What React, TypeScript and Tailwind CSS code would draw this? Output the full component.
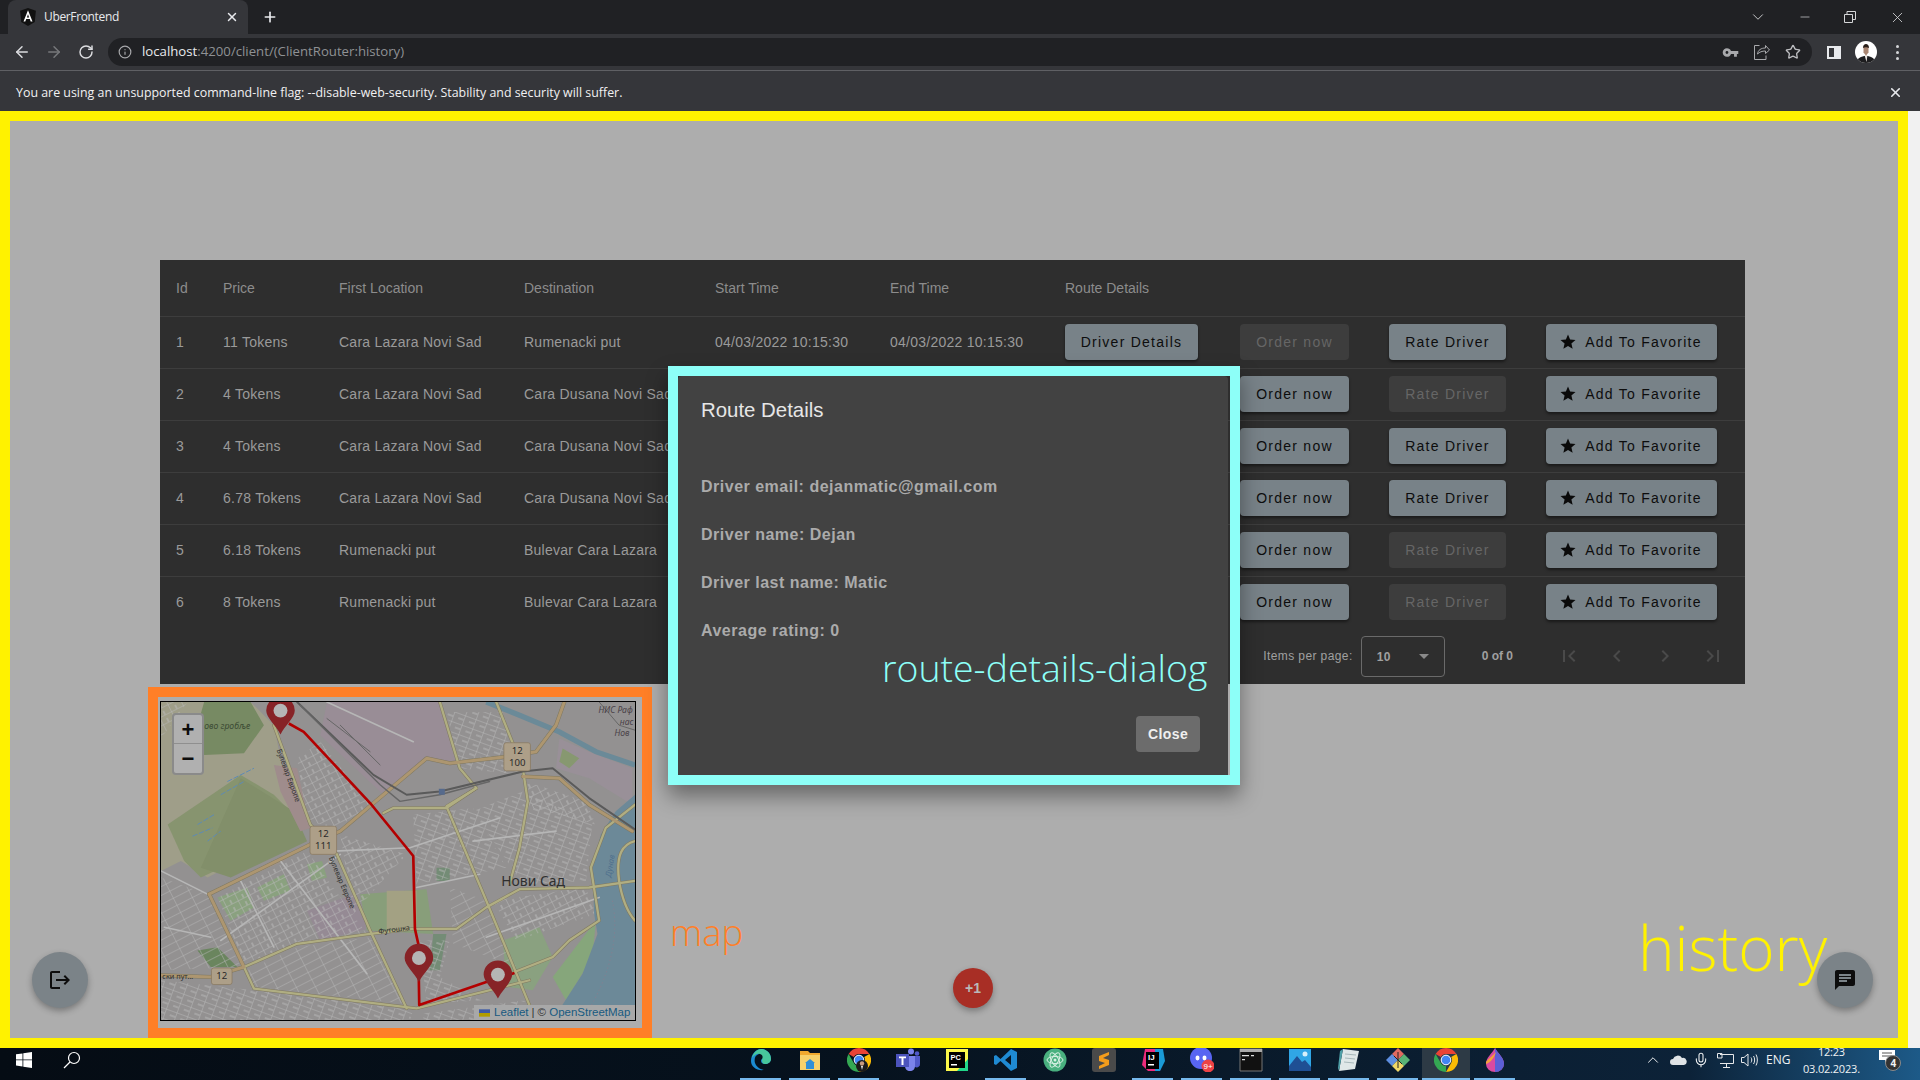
import { ArrowLeft, ArrowRight, RotateCw, Info, Star, X, Plus, ChevronDown, ChevronUp, Minus, Mic } from "lucide-react";
import { MdChat, MdChevronLeft, MdChevronRight, MdFirstPage, MdLastPage, MdLogout, MdStar, MdVpnKey } from "react-icons/md";

const rows = [
  { id: 1, price: "11 Tokens", from: "Cara Lazara Novi Sad", to: "Rumenacki put", order: false, rate: true },
  { id: 2, price: "4 Tokens", from: "Cara Lazara Novi Sad", to: "Cara Dusana Novi Sad", order: true, rate: false },
  { id: 3, price: "4 Tokens", from: "Cara Lazara Novi Sad", to: "Cara Dusana Novi Sad", order: true, rate: true },
  { id: 4, price: "6.78 Tokens", from: "Cara Lazara Novi Sad", to: "Cara Dusana Novi Sad", order: true, rate: true },
  { id: 5, price: "6.18 Tokens", from: "Rumenacki put", to: "Bulevar Cara Lazara", order: true, rate: false },
  { id: 6, price: "8 Tokens", from: "Rumenacki put", to: "Bulevar Cara Lazara", order: true, rate: false },
];

function TableButton({ label, enabled, width, star }: { label: string; enabled: boolean; width: string; star?: boolean }) {
  return (
    <div
      className={`${width} ${
        enabled ? "bg-[#788288] text-[#0d0d0d] shadow-[0_2px_3px_rgba(0,0,0,0.45)]" : "bg-[#3d3d3d] text-[#666666]"
      } ${star ? "pr-[2px]" : ""} flex h-[36px] items-center justify-center rounded-[4px] text-[14px] tracking-[1.25px]`}
    >
      {star && <MdStar className="mr-[8px] text-[#0a0a0a]" size={18} />}
      {label}
    </div>
  );
}

function Browser() {
  return (
    <>
      {/* tab strip */}
      <div className="flex h-[34px] items-end bg-[#202124] pl-[8px] text-[#e8eaed]">
        <div className="flex h-[34px] w-[240px] items-center rounded-t-[8px] bg-[#35363a] pl-[12px] pr-[9px]">
          <svg width="16" height="18" viewBox="0 0 14 16">
            <path d="M7 0 14 2.5 13 12.5 7 16 1 12.5 0 2.5Z" fill="#111" />
            <path d="M7 2 3 12h1.6l.8-2.2h3.2L9.400 12H11ZM6 8.400 7 5.600 8 8.400Z" fill="#fff" />
          </svg>
          <span className="ml-[8px] flex-1 font-['Open_Sans',sans-serif] text-[12px] tracking-[-0.35px]">UberFrontend</span>
          <X size={14} strokeWidth={2.5} />
        </div>
        <div className="flex h-[34px] w-[44px] items-center justify-center">
          <Plus size={16} strokeWidth={2.5} />
        </div>
        <div className="ml-auto flex h-[34px] items-center text-[#d5d6d8]">
          <ChevronDown size={18} strokeWidth={1.2} className="mr-[31px]" />
          <Minus size={14} strokeWidth={1.2} className="mr-[32px]" />
          <svg width="12" height="12" viewBox="0 0 12 12" fill="none" stroke="currentColor" className="mr-[33px]">
            <path d="M.5 3.500h8v8h-8zM3 3.500V.5h8.500v8H8.500" />
          </svg>
          <X size={17} strokeWidth={1.2} className="mr-[14px]" />
        </div>
      </div>

      {/* toolbar */}
      <div className="flex h-[37px] items-center border-b border-[#5f6064] bg-[#35363a] pl-[13px] text-[#dcdde0]">
        <ArrowLeft size={18} strokeWidth={2} />
        <ArrowRight size={18} strokeWidth={2} className="ml-[14px] text-[#77787b]" />
        <RotateCw size={16} strokeWidth={2.2} className="ml-[15px]" />
        <div className="ml-[14px] flex h-[28px] w-[1704px] items-center rounded-full bg-[#202124] pl-[10px] pr-[11px]">
          <Info size={14} className="text-[#a8a9ac]" />
          <span className="ml-[10px] flex-1 font-['Open_Sans',sans-serif] text-[13.2px] text-[#8f9194]">
            <span className="text-[#e8eaed]">localhost</span>:4200/client/(ClientRouter:history)
          </span>
          <MdVpnKey size={17} className="mr-[15px] text-[#a8a9ac]" />
          <svg width="16" height="16" viewBox="0 0 16 16" fill="none" stroke="#a8a9ac" className="mr-[15px]">
            <path d="M5.500 1.500H.5v14h11.500v-4M3.500 10c.5-4 3.500-6 8-6V1.500l4 4.500-4 3.500V7c-3.500 0-6 1-8 3Z" />
          </svg>
          <Star size={16} className="text-[#bdbec1]" />
        </div>
        <svg width="14" height="13" viewBox="0 0 14 13" className="ml-[15px]">
          <path d="M0 0h14v13H0z" fill="#e8eaed" />
          <path d="M2 2h5v9H2z" fill="#35363a" />
        </svg>
        <div className="relative ml-[14px] h-[22px] w-[22px] overflow-hidden rounded-full bg-white">
          <svg width="22" height="22" viewBox="0 0 22 22">
            <path d="M2 22c0-5 4-7 9-7s9 2 9 7Z" fill="#1d1d1f" />
            <path d="M9.500 14h3l-1 7Z" fill="#e8e4e0" />
            <path d="M8.500 6h5v5.500l-2.500 3-2.500-3Z" fill="#a98672" />
            <path d="M8 7c0-3 1.500-4 3-4s3 1 3 4c-1.500-1-4.500-1-6 0Z" fill="#2a1f1a" />
          </svg>
        </div>
        <div className="ml-[19px] flex flex-col gap-[3px]">
          <span className="h-[3px] w-[3px] rounded-full bg-[#d5d6d8]" />
          <span className="h-[3px] w-[3px] rounded-full bg-[#d5d6d8]" />
          <span className="h-[3px] w-[3px] rounded-full bg-[#d5d6d8]" />
        </div>
      </div>

      {/* infobar */}
      <div className="flex h-[40px] items-center justify-between bg-[#35363a] pl-[16px] pr-[17px] pt-[3px] font-['Open_Sans',sans-serif] text-[12.4px] text-[#f1f1f2]">
        <span className="pt-[2px]">You are using an unsupported command-line flag: --disable-web-security. Stability and security will suffer.</span>
        <X size={15} strokeWidth={2.5} className="text-[#e8eaed]" />
      </div>
    </>
  );
}

function HistoryTable() {
  return (
    <div className="ml-[150px] mt-[139px] w-[1585px] bg-[#2e2e2e] font-['Liberation_Sans',sans-serif] text-[14px] text-[#9a9a9a]">
      <table className="w-full table-fixed border-collapse">
        <colgroup>
          <col className="w-[63px]" />
          <col className="w-[116px]" />
          <col className="w-[185px]" />
          <col className="w-[191px]" />
          <col className="w-[175px]" />
          <col className="w-[175px]" />
          <col className="w-[175px]" />
          <col className="w-[149px]" />
          <col className="w-[157px]" />
          <col className="w-[199px]" />
        </colgroup>
        <thead>
          <tr className="h-[56px] border-b border-[#3d3d3d] text-left text-[#8c8c8c]">
            <th className="pl-[16px] pt-[1px] font-normal">Id</th>
            <th className="pt-[1px] font-normal">Price</th>
            <th className="pt-[1px] font-normal">First Location</th>
            <th className="pt-[1px] font-normal">Destination</th>
            <th className="pt-[1px] font-normal">Start Time</th>
            <th className="pt-[1px] font-normal">End Time</th>
            <th className="pt-[1px] font-normal">Route Details</th>
            <th colSpan={3}></th>
          </tr>
        </thead>
        <tbody className="tracking-[0.25px]">
          {rows.map((row, i) => (
            <tr key={row.id} className={`h-[52px] ${i < rows.length - 1 ? "border-b border-[#3d3d3d]" : ""}`}>
              <td className="pl-[16px]">{row.id}</td>
              <td>{row.price}</td>
              <td>{row.from}</td>
              <td className="whitespace-nowrap">{row.to}</td>
              <td>{i === 0 && "04/03/2022 10:15:30"}</td>
              <td>{i === 0 && "04/03/2022 10:15:30"}</td>
              <td>{i === 0 && <TableButton label="Driver Details" enabled width="w-[133px]" />}</td>
              <td><TableButton label="Order now" enabled={row.order} width="w-[109px]" /></td>
              <td><TableButton label="Rate Driver" enabled={row.rate} width="w-[117px]" /></td>
              <td><TableButton label="Add To Favorite" enabled star width="w-[171px]" /></td>
            </tr>
          ))}
        </tbody>
      </table>
      <div className="flex h-[56px] items-center justify-end pr-[8px] text-[12px] tracking-[0.4px] text-[#a0a0a0]">
        <span>Items per page:</span>
        <div className="ml-[8px] mt-[1px] flex h-[41px] w-[84px] items-center justify-between rounded-[4px] border border-[#6a6a6a] pl-[15px] pr-[15px] font-bold">
          <span>10</span>
          <span className="h-0 w-0 border-x-[5px] border-t-[5px] border-x-transparent border-t-[#8a8a8a]" />
        </div>
        <span className="ml-[37px] font-bold tracking-normal">0 of 0</span>
        <div className="ml-[32px] flex text-[#4a4a4a]">
          <MdFirstPage size={24} className="mx-[12px]" />
          <MdChevronLeft size={24} className="mx-[12px]" />
          <MdChevronRight size={24} className="mx-[12px]" />
          <MdLastPage size={24} className="mx-[12px]" />
        </div>
      </div>
    </div>
  );
}

function Pin({ cx, tip }: { cx: number; tip: number }) {
  const y = tip - 72;
  return (
    <g>
      <path d={`M${cx} ${tip} C${cx - 14} ${tip - 28} ${cx - 43} ${y + 22} ${cx - 43} ${y} A43 43 0 0 1 ${cx + 43} ${y} C${cx + 43} ${y + 22} ${cx + 14} ${tip - 28} ${cx} ${tip}Z`} fill="#872327" />
      <circle cx={cx} cy={y} r="21" fill="#b5b5b5" />
    </g>
  );
}

function Shield({ x, y, w, h, lines }: { x: number; y: number; w: number; h: number; lines: string[] }) {
  return (
    <g>
      <rect x={x} y={y} width={w} height={h} rx="7" fill="#ad9f88" stroke="#85755b" strokeWidth="2" />
      {lines.map((line, i) => (
        <text key={line} x={x + w / 2} y={y + 33 + i * 36} textAnchor="middle" fontSize="29" fill="#2a2a2a" fontFamily="'Noto Sans', sans-serif">
          {line}
        </text>
      ))}
    </g>
  );
}

function CityMap() {
  const major = "#ad9670";
  const second = "#b0ae82";
  const casing = "#7f7860";
  const street = "#b6b6b6";
  const majorRoads = [
    "M205 640 510 490 600 450 730 340 860 230 930 245 1100 225 1190 210 1250 130 1275 60",
    "M205 640 310 860 210 890 60 885",
    "M1150 285 1260 290 1350 370 1480 450",
  ];
  const secondRoads = [
    "M400 130 510 430 590 520 690 750 800 985",
    "M310 860 340 925 830 985 1170 900",
    "M310 860 470 790 690 760 820 745 950 745 1040 680 1140 625 1350 620 1488 600",
    "M900 60 960 260 1010 320 920 375 1040 660 1170 975",
    "M730 395 760 380 920 380 1010 320",
    "M1070 60 1150 260 1165 360 1140 500 1110 610",
    "M1125 875 1240 830 1290 780 1380 720 1355 560 1400 440 1488 370",
    "M1440 600C1430 520 1450 490 1488 480M1440 600C1450 660 1470 700 1488 720",
  ];
  return (
    <svg viewBox="60 60 1428 960" className="block h-full w-full" preserveAspectRatio="none">
      <defs>
        <pattern id="blocksA" width="40" height="24" patternUnits="userSpaceOnUse" patternTransform="rotate(-27)">
          <path d="M0 0H40M0 0V24M20 12V24" stroke="#b8b8b8" strokeWidth="3" fill="none" />
        </pattern>
        <pattern id="blocksB" width="24" height="52" patternUnits="userSpaceOnUse" patternTransform="rotate(63)">
          <path d="M0 0H24M0 0V52" stroke="#b6b6b6" strokeWidth="3" fill="none" />
        </pattern>
        <pattern id="blocksC" width="34" height="30" patternUnits="userSpaceOnUse" patternTransform="rotate(20)">
          <path d="M0 0H34M0 0V30M17 15H34" stroke="#b7b7b7" strokeWidth="3" fill="none" />
        </pattern>
      </defs>
      <rect x="60" y="60" width="1428" height="960" fill="#939191" />

      {/* land use */}
      <path d="M560 60H900L950 250 860 230 730 340 540 160Z" fill="#998d96" />
      <path d="M60 60H330L400 130 440 330 510 430 200 590 120 540 60 570Z" fill="#9f9e89" />
      <path d="M80 430 300 280 400 340 500 440 180 590 130 540Z" fill="#87946f" />
      <path d="M180 560 300 290 460 390 500 480 270 590Z" fill="#828f6a" />
      <path d="M190 60H330L370 130 310 215 190 220 170 130Z" fill="#778a63" />
      <path d="M400 250 470 260 510 440 480 450 420 330Z" fill="#9f8c8c" />
      <path d="M200 640 510 490 420 545 250 620Z" fill="#9f938b" />
      <path d="M500 690 640 640 700 740 540 780Z" fill="#958a94" />
      <path d="M660 640 860 625 880 760 680 750Z" fill="#889e7a" />
      <path d="M740 630H830V745H740Z" fill="#a3a183" />
      <path d="M890 560H930V600H890ZM880 760H920L900 870H870Z" fill="#748c76" />
      <path d="M1090 780 1200 740 1240 830 1180 930 1100 920Z" fill="#8aa180" />
      <path d="M1240 890 1370 720 1360 830 1280 960Z" fill="#86a67b" />
      <path d="M1260 170 1350 210 1480 260V370L1350 290 1250 260Z" fill="#999098" />
      <path d="M1270 200 1320 230 1290 260 1260 240Z" fill="#879870" />
      <path d="M230 650 320 620 340 680 270 720Z" fill="#8aa17f" />
      <path d="M350 620 430 580 450 630 370 660Z" fill="#8aa17f" />
      <path d="M500 550 545 540 560 590 515 600Z" fill="#8aa17f" />
      <path d="M170 810 230 800 290 860 210 860Z" fill="#6a855e" />

      {/* street blocks */}
      <path d="M470 230 540 180 690 370 590 440 500 420Z" fill="url(#blocksA)" />
      <path d="M600 460 800 520 690 640 640 700Z" fill="url(#blocksA)" />
      <path d="M820 400 1000 380 1100 560 830 610Z" fill="url(#blocksC)" />
      <path d="M1000 390 1150 330 1360 420 1340 600 1150 610Z" fill="url(#blocksC)" />
      <path d="M920 90 1090 90 1150 280 960 260Z" fill="url(#blocksC)" />
      <path d="M1160 300 1340 360 1370 430 1180 380Z" fill="url(#blocksA)" />
      <path d="M320 870 470 800 690 770 790 970 340 920Z" fill="url(#blocksB)" />
      <path d="M230 650 500 510 680 760 470 790 310 850Z" fill="url(#blocksA)" />
      <path d="M60 590 200 640 300 860 60 870Z" fill="url(#blocksB)" />
      <path d="M60 900 340 930 820 990 810 1020H60Z" fill="url(#blocksC)" />
      <path d="M930 620 1040 660 1130 860 940 790Z" fill="url(#blocksB)" />
      <path d="M1060 660 1340 620 1370 700 1130 780Z" fill="url(#blocksA)" />
      <path d="M850 1000 1160 960 1100 1020H850Z" fill="url(#blocksC)" />
      <path d="M60 60 140 60 60 170Z" fill="url(#blocksA)" />
      <path d="M840 780 930 780 900 890 1030 960 860 970Z" fill="url(#blocksC)" />

      {/* water */}
      <path d="M1488 340 1430 390 1385 460 1360 560 1365 700 1375 760 1330 880 1240 1020H1488Z" fill="#6c8998" />
      <path d="M1040 60 1140 100 1260 150 1370 210 1488 250" stroke="#6b8a98" strokeWidth="16" fill="none" />
      <path d="M1420 660C1440 760 1420 880 1330 1020" stroke="#8f7b8c" strokeWidth="2" strokeDasharray="4 8" fill="none" />
      <path d="M170 430 220 400M155 465 215 440M260 300 340 260M240 340 310 300M200 480 240 450" stroke="#5d8ab5" strokeWidth="3" strokeDasharray="16 5" fill="none" />

      {/* roads */}
      <g fill="none" strokeLinejoin="round" strokeLinecap="round">
        <path d="M580 510 810 500 1080 410M240 780 600 520M1020 580 830 620M70 740 210 770M60 570 200 640" stroke={street} strokeWidth="5" />
        <path d="M420 540 680 880M300 600 400 800M1000 480 1250 450M1040 770 1380 650M560 60 820 180" stroke={street} strokeWidth="5" />
        {secondRoads.map((d) => (
          <path key={d} d={d} stroke={casing} strokeWidth="10" />
        ))}
        {majorRoads.map((d) => (
          <path key={d} d={d} stroke={casing} strokeWidth="12" />
        ))}
        {secondRoads.map((d) => (
          <path key={d} d={d} stroke={second} strokeWidth="7" />
        ))}
        {majorRoads.map((d) => (
          <path key={d} d={d} stroke={major} strokeWidth="9" />
        ))}

        {/* railway */}
        <path d="M470 60 700 280 800 340 900 330 1150 270 1240 260 1350 350 1488 445" stroke="#5a5a5a" strokeWidth="6" />
        <path d="M480 70 720 310 780 360 900 340 1050 300" stroke="#666666" strokeWidth="4" />
        <path d="M560 110 690 210M1380 60 1440 130 1488 145M600 130 720 250" stroke="#666666" strokeWidth="3" />
      </g>
      <rect x="897" y="322" width="18" height="18" fill="#566a8c" />

      {/* route */}
      <path d="M445 125 490 150 690 365 820 525 825 745 835 790 838 975 1040 905 1125 878" stroke="#b30000" strokeWidth="8" fill="none" strokeLinejoin="round" />
      <Pin cx={420} tip={158} />
      <Pin cx={837} tip={905} />
      <Pin cx={1075} tip={955} />

      {/* labels */}
      <g fontFamily="'Noto Sans', sans-serif" fill="#2f2f2f">
        <text x="1085" y="616" fontSize="42">Нови Сад</text>
        <text x="190" y="142" fontSize="26" fontStyle="italic" fill="#3c4a34">ово гробље</text>
        <text x="1378" y="92" fontSize="26" fontStyle="italic" fill="#4a4248">НИС Раф</text>
        <text x="1442" y="128" fontSize="26" fontStyle="italic" fill="#4a4248">нас</text>
        <text x="1426" y="164" fontSize="26" fontStyle="italic" fill="#4a4248">Нов</text>
        <text x="0" y="0" fontSize="22" transform="translate(408 205) rotate(70)">Булевар Европе</text>
        <text x="0" y="0" fontSize="22" transform="translate(565 530) rotate(67)">Булевар Европе</text>
        <text x="0" y="0" fontSize="22" transform="translate(716 760) rotate(-7)">Футошка</text>
        <text x="64" y="896" fontSize="22">ски пут...</text>
        <text x="0" y="0" fontSize="24" fill="#4f6f8c" fontStyle="italic" transform="translate(1415 590) rotate(-80)">Дунав</text>
      </g>
      <Shield x={1093} y={183} w={80} h={85} lines={["12", "100"]} />
      <Shield x={509} y={435} w={80} h={85} lines={["12", "111"]} />
      <Shield x={212} y={863} w={62} h={50} lines={["12"]} />
    </svg>
  );
}

function MapPanel() {
  return (
    <div className="ml-[138px] mt-[3px] h-[351px] w-[504px] border-[10px] border-[#ff7f27] bg-[#adadad] pb-[7px] pl-[2px] pr-[6px] pt-[4px]">
      <div className="relative h-full w-full border border-black">
        <CityMap />
        <div className="absolute left-[11px] top-[11px] w-[32px] overflow-hidden rounded-[4px] border-2 border-[#8a8a8a] bg-[#b0b0b0] text-center font-['Liberation_Sans',sans-serif] font-bold text-[#0d0d0d]">
          <div className="flex h-[29px] items-center justify-center border-b border-[#8f8f8f] text-[22px]">+</div>
          <div className="flex h-[29px] items-center justify-center text-[22px]">−</div>
        </div>
        <div className="absolute bottom-0 right-0 flex h-[15px] w-[161px] items-center bg-[#a8a8a8] pl-[5px] font-['Liberation_Sans',sans-serif] text-[11.5px] text-[#333333]">
          <svg width="11" height="8" viewBox="0 0 12 8" className="mr-[4px]">
            <path d="M0 0h12v4H0z" fill="#3e5aa6" />
            <path d="M0 4h12v4H0z" fill="#b09c00" />
          </svg>
          <span className="text-[#175a80]">Leaflet</span>
          <span className="mx-[3px]">|</span>
          <span>©&nbsp;</span>
          <span className="text-[#175a80]">OpenStreetMap</span>
        </div>
      </div>
    </div>
  );
}

function RouteDialog() {
  return (
    <div className="absolute left-[658px] top-[245px] z-10 h-[419px] w-[572px] border-[10px] border-[#8dfff8] shadow-[0_11px_20px_rgba(0,0,0,0.4)]">
      <div className="relative h-full w-[550px] rounded-t-[4px] bg-[#424242] px-[23px] font-['Liberation_Sans',sans-serif]">
        <h2 className="pt-[22px] text-[20.4px] leading-[24px] text-[#e6e6e6]">Route Details</h2>
        <div className="mt-[41px] text-[16px] font-bold leading-[48px] tracking-[0.5px] text-[#ababab]">
          <p>Driver email: dejanmatic@gmail.com</p>
          <p>Driver name: Dejan</p>
          <p>Driver last name: Matic</p>
          <p>Average rating: 0</p>
        </div>
        <div className="absolute bottom-[23px] right-[28px] flex h-[36px] w-[64px] items-center justify-center rounded-[4px] bg-[#6c6c6c] text-[14px] font-bold tracking-[0.4px] text-[#efefef]">
          Close
        </div>
      </div>
      <span className="absolute left-[204px] top-[267px] font-['Open_Sans',sans-serif] text-[37.4px] font-light leading-[50px] text-[#8dfff8]">
        route-details-dialog
      </span>
    </div>
  );
}

function Taskbar() {
  return (
    <div className="relative flex h-[32px] items-center overflow-hidden bg-[linear-gradient(90deg,#050c14_0%,#06121e_45%,#0a1c2e_70%,#0c2238_88%,#1d5a88_100%)] text-[#f0f2f4]">
      <svg width="16" height="16" viewBox="0 0 16 16" className="mb-[8px] ml-[16px]" fill="#fff">
        <path d="M0 2.300 6.500 1.400V7.500H0ZM7.300 1.300 16 0V7.500H7.300ZM0 8.300H6.500V14.500L0 13.600ZM7.300 8.300H16V16L7.300 14.700Z" />
      </svg>
      <svg width="18" height="18" viewBox="0 0 18 18" fill="none" stroke="#fff" strokeWidth="1.200" className="mb-[8px] ml-[31px]">
        <circle cx="11" cy="7" r="5.500" />
        <path d="M7 11 1 17" />
      </svg>

      <div className="ml-[655px] flex items-center">
        <TaskIcon underline>
          <path d="M2 13C2 6 7 1 12 1s10 4 10 10c0 3-3 5-6 5-2 0-4-1-4-3 0-3 4-2 3-5-1-2-3-3-5-2-4 1-5 5-4 9 1 3 4 6 9 7-7 1-13-3-13-9Z" fill="#1b8ad0" />
          <path d="M12 1c5 0 10 4 10 10 0 3-3 5-6 5-3 0-3-3-3-4 1-3 1-5-2-6-3-1-6 1-8 4 1-5 5-9 9-9Z" fill="#47c79b" />
        </TaskIcon>
        <TaskIcon underline>
          <path d="M2 3h8l2 2h10v3H2Z" fill="#f0a92e" />
          <path d="M2 7h20v15H2Z" fill="#f6d16a" />
          <path d="M8 15h8v6H8Z" fill="#2f8fd6" />
          <path d="M7 15h10l-5-4Z" fill="#2f8fd6" />
        </TaskIcon>
        <TaskIcon underline>
          <ChromeMark />
          <circle cx="15" cy="18" r="6" fill="#1b1b1b" />
          <circle cx="15" cy="15.500" r="2.200" fill="#c99b80" />
          <path d="M14 18h2l-1 4Z" fill="#eee" />
        </TaskIcon>
        <TaskIcon>
          <circle cx="15" cy="3.500" r="3" fill="#7b83eb" />
          <circle cx="21" cy="5.500" r="2.300" fill="#5059c9" />
          <path d="M17 8h7v8c0 3-3 4-5 3Z" fill="#5059c9" />
          <path d="M9 8h10v10c0 3-2 5-5 5s-5-2-5-5Z" fill="#7b83eb" />
          <path d="M0 6h13v13H0Z" fill="#4b53bc" />
          <path d="M3 8.500h7v1.800H7.500V17H5.500v-6.700H3Z" fill="#fff" />
        </TaskIcon>
        <TaskIcon>
          <path d="M1 1h22v22H1Z" fill="#21d789" />
          <path d="M1 1h22v10L12 23H1Z" fill="#fcf84a" />
          <path d="M4 4h16v16H4Z" fill="#000" />
          <text x="5.500" y="12" fontSize="7.500" fill="#fff" fontFamily="'Liberation Sans', sans-serif" fontWeight="700">PC</text>
          <path d="M6 16h6v1.500H6Z" fill="#fff" />
        </TaskIcon>
        <TaskIcon underline>
          <path d="M17 1 23 4V20L17 23 6.500 13 2 17 0 16V8L2 7 6.500 11ZM17 7 11 12 17 17Z" fill="#1f8ad2" />
        </TaskIcon>
        <TaskIcon>
          <circle cx="12" cy="12" r="11.500" fill="#49b07f" />
          <g fill="none" stroke="#d8f0e4" strokeWidth="1">
            <ellipse cx="12" cy="12" rx="8" ry="3.500" transform="rotate(60 12 12)" />
            <ellipse cx="12" cy="12" rx="8" ry="3.500" transform="rotate(-60 12 12)" />
            <ellipse cx="12" cy="12" rx="8" ry="3.500" />
          </g>
          <circle cx="12" cy="12" r="1.500" fill="#d8f0e4" />
        </TaskIcon>
        <TaskIcon>
          <rect x="0" y="0" width="24" height="24" rx="3" fill="#4a4a4a" />
          <path d="M17 4 7 8v5l6 2-6 3v3l10-4v-5l-6-2 6-3Z" fill="#f49d1c" />
        </TaskIcon>
        <TaskIcon underline>
          <path d="M4 1h12l6 8-3 14H7L1 17Z" fill="#ed2b7b" />
          <path d="M14 1h8l2 12-5 10h-5Z" fill="#1a9ad6" />
          <path d="M5 4h13v17H5Z" fill="#000" />
          <text x="7" y="12" fontSize="8" fill="#fff" fontFamily="'Liberation Sans', sans-serif" fontWeight="700">IJ</text>
          <path d="M7 16h6v1.500H7Z" fill="#fff" />
        </TaskIcon>
        <TaskIcon underline>
          <circle cx="11" cy="10" r="11" fill="#5865f2" />
          <ellipse cx="7.500" cy="10" rx="2" ry="2.400" fill="#fff" />
          <ellipse cx="14.500" cy="10" rx="2" ry="2.400" fill="#fff" />
          <circle cx="18" cy="18" r="6.500" fill="#ed4245" />
          <text x="18" y="21" fontSize="8" textAnchor="middle" fill="#fff" fontFamily="'Liberation Sans', sans-serif">9+</text>
        </TaskIcon>
        <TaskIcon underline>
          <path d="M1 1h22v22H1Z" fill="#111" stroke="#777" />
          <path d="M1 1h22v3H1Z" fill="#aaa" />
          <path d="M3 7h7v1.300H3ZM12 7h3v1.300h-3ZM3 11h3v1.300H3Z" fill="#ddd" />
        </TaskIcon>
        <TaskIcon underline>
          <path d="M1 1h22v22H1Z" fill="#30a6e6" />
          <circle cx="17" cy="6" r="2.500" fill="#d6f0fb" />
          <path d="M1 23V18L9 8l5 6 3-2 6 7v4Z" fill="#1f4f94" />
        </TaskIcon>
        <TaskIcon underline>
          <path d="M6 1 22 3 18 21 2 23Z" fill="#dfe7e8" />
          <path d="M2 23 6 1 3 3 1 20Z" fill="#4fa0a8" />
          <path d="M8 6 19 7M8 10 18 11M7 14 17 15" stroke="#a7b8bb" />
        </TaskIcon>
        <TaskIcon underline>
          <path d="M12 0 18 6 12 12 6 6Z" fill="#e06a60" />
          <path d="M6 6 12 12 6 18 0 12Z" fill="#5d8ee0" />
          <path d="M18 6 24 12 18 18 12 12Z" fill="#59b376" />
          <path d="M12 12 18 18 12 24 6 18Z" fill="#f0d868" />
          <path d="M12 4V20M8 8 16 16" stroke="#222" />
        </TaskIcon>
        <div className="relative flex h-[32px] w-[48px] items-start justify-center bg-[#2d3a45]">
          <svg width="24" height="24" viewBox="0 0 24 24"><ChromeMark /></svg>
          <span className="absolute bottom-0 left-0 h-[2px] w-full bg-[#76b9ed]" />
        </div>
        <TaskIcon underline>
          <path d="M12 0C15 6 21 9 21 16a9 8 0 0 1-18 0C3 9 9 6 12 0Z" fill="#d94aa0" />
          <path d="M12 0C15 6 21 9 21 16a9 8 0 0 1-9 8Z" fill="#5b5fd6" />
          <path d="M3 14C7 9 10 8 13 4 11 10 8 14 3 16Z" fill="#f2a33a" />
        </TaskIcon>
      </div>

      <div className="ml-[121px] flex h-[32px] flex-1 items-center font-['Open_Sans',sans-serif] text-[12px]">
        <ChevronUp size={18} strokeWidth={1.300} className="mb-[8px] ml-[4px]" />
        <svg width="17" height="10" viewBox="0 0 17 10" fill="#dfe3e6" className="mb-[8px] ml-[8px]">
          <path d="M3 10a3 3 0 0 1 0-6 5 5 0 0 1 9-1 3.500 3.500 0 0 1 2 7Z" />
        </svg>
        <Mic size={16} strokeWidth={1.600} className="mb-[8px] ml-[6px]" />
        <svg width="17" height="15" viewBox="0 0 17 15" fill="none" stroke="#e6e8ea" className="mb-[8px] ml-[8px]">
          <path d="M3 1.500H16.500V10.500H3M9.500 10.500V14M6 14.500H13M.5 .5H5V5H.5Z" />
        </svg>
        <svg width="17" height="14" viewBox="0 0 17 14" fill="none" stroke="#e6e8ea" className="mb-[8px] ml-[7px]">
          <path d="M.5 4.500H3L7 1V13L3 9.500H.5ZM10 4.500C11 6 11 8 10 9.500M12.500 3C14 5 14 9 12.500 11M15 1.500C16.800 4.500 16.800 9.500 15 12.500" />
        </svg>
        <span className="mb-[8px] ml-[8px]">ENG</span>
        <div className="ml-[10px] flex h-[32px] w-[62px] flex-col items-center justify-end pb-[3px] text-[11px] leading-[17px] tracking-[-0.2px]">
          <span>12:23</span>
          <span className="whitespace-nowrap">03.02.2023.</span>
        </div>
        <div className="relative mb-[8px] ml-[17px] h-[20px] w-[20px]">
          <svg width="16" height="15" viewBox="0 0 16 15" fill="#fff">
            <path d="M0 0h16v10H9l-3 4v-4H0Z" />
            <path d="M3 3h10M3 6h10" stroke="#555" />
          </svg>
          <span className="absolute left-[6px] top-[5px] flex h-[16px] w-[16px] items-center justify-center rounded-full border border-[#8a8a8a] bg-[#333] text-[10px] font-bold">4</span>
        </div>
      </div>
    </div>
  );
}

function TaskIcon({ children, underline }: { children: React.ReactNode; underline?: boolean }) {
  return (
    <div className="relative flex h-[32px] w-[49px] items-start justify-center">
      <svg width="24" height="24" viewBox="0 0 24 24">{children}</svg>
      {underline && <span className="absolute bottom-0 left-[4px] right-[4px] h-[2px] bg-[#76b9ed]" />}
    </div>
  );
}

function ChromeMark() {
  return (
    <>
      <path d="M12 0a12 12 0 0 1 10.400 6H12a6 6 0 0 0-5.200 3L1.600 6A12 12 0 0 1 12 0Z" fill="#ea4335" />
      <path d="M22.400 6A12 12 0 0 1 12 24l5.200-9A6 6 0 0 0 17.200 9Z" fill="#fbbc05" />
      <path d="M12 24A12 12 0 0 1 1.600 6L6.800 15A6 6 0 0 0 12 18Z" fill="#34a853" />
      <circle cx="12" cy="12" r="4.800" fill="#4285f4" stroke="#fff" strokeWidth="1" />
    </>
  );
}

export default function App() {
  return (
    <div className="flex h-screen w-[1920px] flex-col overflow-hidden bg-[#f1f1f1]">
      <Browser />
      <div className="flex flex-1">
        <div className="relative w-[1908px] border-[10px] border-[#fff200] bg-[#adadad]">
          <HistoryTable />
          <MapPanel />
          <RouteDialog />
          <span className="absolute left-[660px] top-[788px] font-['Open_Sans',sans-serif] text-[36.5px] font-light leading-[46px] text-[#ff7f27]">map</span>
          <span className="absolute left-[1628px] top-[787px] font-['Open_Sans',sans-serif] text-[62px] font-light leading-[78px] text-[#fff200]">history</span>
          <div className="absolute left-[22px] top-[831px] flex h-[56px] w-[56px] items-center justify-center rounded-full bg-[#7b8388] text-[#0d0d0d] shadow-[0_3px_6px_rgba(0,0,0,0.3)]">
            <MdLogout size={24} />
          </div>
          <div className="absolute left-[1807px] top-[831px] flex h-[56px] w-[56px] items-center justify-center rounded-full bg-[#7b8388] text-[#0d0d0d] shadow-[0_3px_6px_rgba(0,0,0,0.3)]">
            <MdChat size={24} />
          </div>
          <div className="absolute left-[943px] top-[847px] flex h-[40px] w-[40px] items-center justify-center rounded-full bg-[#a82e25] font-['Liberation_Sans',sans-serif] text-[14px] font-bold text-[#b9b9b9] shadow-[0_3px_6px_rgba(0,0,0,0.3)]">
            +1
          </div>
        </div>
      </div>
      <Taskbar />
    </div>
  );
}
